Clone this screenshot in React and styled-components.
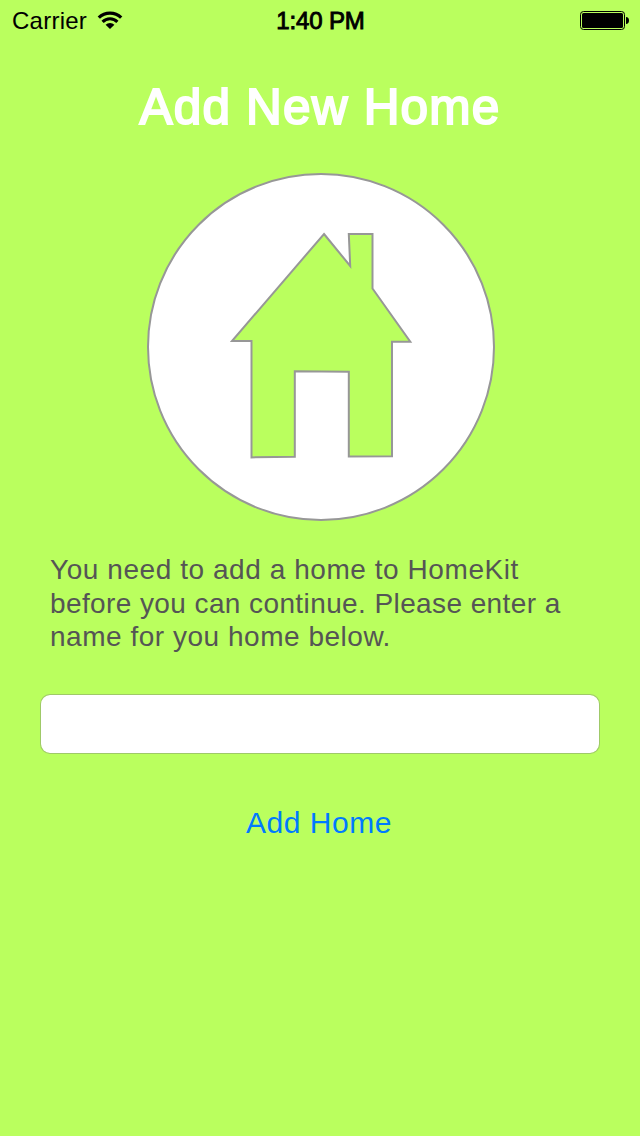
import React from "react";
import styled, { createGlobalStyle } from "styled-components";

const LIME = "#baff5e";

const GlobalStyle = createGlobalStyle`
  * { box-sizing: border-box; }
  body {
    margin: 0;
    background: ${LIME};
    font-family: "Liberation Sans", Arial, sans-serif;
  }
`;

const Screen = styled.main`
  width: 640px;
  height: 1136px;
  display: flex;
  flex-direction: column;
  align-items: center;
  overflow: hidden;
  background: ${LIME};
`;

const StatusBar = styled.header`
  width: 100%;
  height: 42px;
  padding: 0 11px 0 12px;
  display: grid;
  grid-template-columns: 1fr auto 1fr;
  align-items: center;
  font-size: 24px;
  line-height: 42px;
  color: #000;
`;

const CarrierGroup = styled.div`
  display: flex;
  align-items: center;
  gap: 10px;
  letter-spacing: 0.25px;
`;

const Clock = styled.div`
  letter-spacing: -0.15px;
  -webkit-text-stroke: 0.9px #000;
`;

const BatteryIcon = styled.svg`
  justify-self: end;
`;

const Title = styled.h1`
  margin: 35px 0 0;
  font-size: 49.5px;
  font-weight: 400;
  line-height: 60px;
  letter-spacing: 1.2px;
  color: #fff;
  -webkit-text-stroke: 2px #fff;
`;

const HomeBadge = styled.svg`
  flex: none;
  margin: 35px 0 0 2px;
`;

const Message = styled.p`
  width: 540px;
  margin: 31px 0 0;
  font-size: 28px;
  line-height: 33.5px;
  color: #555;
`;

const MessageLine = styled.span`
  display: block;
  white-space: nowrap;
  letter-spacing: ${({ $tracking }) => $tracking}px;
`;

const NameField = styled.input`
  width: 560px;
  height: 60px;
  margin-top: 40.5px;
  padding: 0 14px;
  border: 1px solid rgba(120, 120, 120, 0.4);
  border-radius: 10px;
  background: #fff;
  background-clip: padding-box;
  font: inherit;
  font-size: 28px;
  outline: none;
`;

const AddButton = styled.button`
  margin: 51px 2px 0 0;
  padding: 0;
  border: 0;
  background: none;
  font-family: inherit;
  font-size: 30px;
  line-height: 36px;
  letter-spacing: 0.55px;
  color: #007aff;
`;

export default function App() {
  return (
    <>
      <GlobalStyle />
      <Screen>
        <StatusBar>
          <CarrierGroup>
            <span>Carrier</span>
            <svg width="26" height="20" viewBox="0 0 26 20" fill="none" stroke="#000">
              <path d="M1.8 6.6 A16 16 0 0 1 24.2 6.6" strokeWidth="3.3" />
              <path d="M5.6 10.9 A10.3 10.3 0 0 1 20.4 10.9" strokeWidth="3.1" />
              <path d="M13 18 L8.6 13.8 A6 6 0 0 1 17.4 13.8 Z" fill="#000" stroke="none" />
            </svg>
          </CarrierGroup>
          <Clock>1:40 PM</Clock>
          <BatteryIcon width="49" height="20" viewBox="0 0 49 20">
            <rect x="0.5" y="0.5" width="44" height="18" rx="3" fill="none" stroke="#000" />
            <rect x="2" y="2" width="41" height="15" rx="1.5" fill="#000" />
            <path d="M46 6 C48 6 49 7.5 49 9.5 C49 11.5 48 13 46 13 Z" fill="#000" />
          </BatteryIcon>
        </StatusBar>
        <Title>Add New Home</Title>
        <HomeBadge width="350" height="350" viewBox="146 172 350 350" stroke="#979797" strokeWidth="2">
          <circle cx="321" cy="347" r="173" fill="#fff" />
          <path
            fill={LIME}
            d="M324 234 L350.2 266 L348.8 234 H372.5 V288.5 L410.3 341.7 H392 V456.3 L348.8 456.6 V371.7 L294.8 371.2 V456.8 L251.5 457.4 V341 H232 Z"
          />
        </HomeBadge>
        <Message>
          <MessageLine $tracking={0.56}>You need to add a home to HomeKit</MessageLine>
          <MessageLine $tracking={0.4}>before you can continue. Please enter a</MessageLine>
          <MessageLine $tracking={0.52}>name for you home below.</MessageLine>
        </Message>
        <NameField type="text" aria-label="Home name" />
        <AddButton type="button">Add Home</AddButton>
      </Screen>
    </>
  );
}
